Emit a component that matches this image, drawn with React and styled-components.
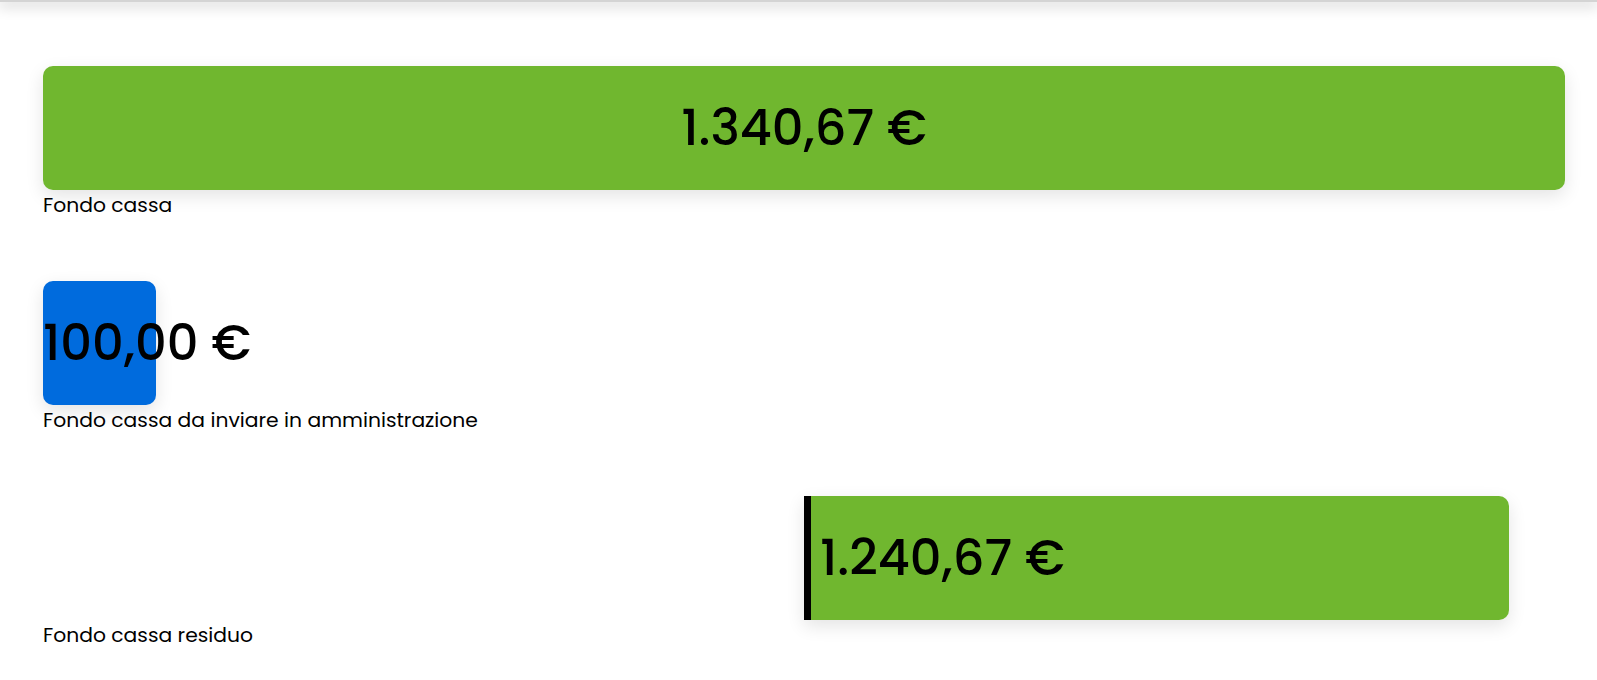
import React from 'react';
import styled, {createGlobalStyle} from 'styled-components';

const GlobalStyle = createGlobalStyle`
  body {
    margin: 0;
    background: #fff;
    font-family: Poppins, Inter, "Noto Sans", sans-serif;
    color: #000;
  }
`;

const funds = [
  {amount: '1.340,67 €', label: 'Fondo cassa', variant: 'total'},
  {amount: '100,00 €', label: 'Fondo cassa da inviare in amministrazione', variant: 'send'},
  {amount: '1.240,67 €', label: 'Fondo cassa residuo', variant: 'rest'},
];

const App = () => {
  return (
    <div>
      <GlobalStyle />
      <TopBar />
      <ContentStyle>
        {funds.map((f) => (
          <SectionStyle key={f.label}>
            <CardStyle variant={f.variant}>{f.amount}</CardStyle>
            <LabelStyle>{f.label}</LabelStyle>
          </SectionStyle>
        ))}
      </ContentStyle>
    </div>
  );
};

export default App;

const TopBar = styled.div`
  position: relative;
  height: 2px;
  background: #d4d4d4;
  box-shadow: 0 2px 14px 2px rgba(0, 0, 0, 0.22);
`;

const ContentStyle = styled.div`
  padding: 64px 32px 0 43px;
  display: flex;
  flex-direction: column;
`;

const SectionStyle = styled.div`
  display: flex;
  flex-direction: column;
  margin-bottom: 64px;
`;

const CardStyle = styled.div`
  height: 124px;
  box-sizing: border-box;
  display: flex;
  align-items: center;
  font-size: 49.5px;
  font-weight: 500;
  white-space: nowrap;
  background: ${(p) => (p.variant === 'send' ? '#006bdd' : '#70b72f')};
  box-shadow: 0 6px 18px rgba(0, 0, 0, 0.11);
  justify-content: ${(p) => (p.variant === 'total' ? 'center' : 'flex-start')};
  width: ${(p) => (p.variant === 'send' ? '113px' : 'auto')};
  margin-left: ${(p) => (p.variant === 'rest' ? '50%' : '0')};
  margin-right: ${(p) => (p.variant === 'rest' ? '56px' : '0')};
  border-left: ${(p) => (p.variant === 'rest' ? '7px solid #000' : 'none')};
  border-radius: ${(p) => (p.variant === 'rest' ? '0 10px 10px 0' : '10px')};
  padding-left: ${(p) => (p.variant === 'rest' ? '9px' : '0')};
`;

const LabelStyle = styled.div`
  margin-top: 3px;
  font-size: 20.3px;
  font-weight: 400;
  line-height: 24px;
`;
